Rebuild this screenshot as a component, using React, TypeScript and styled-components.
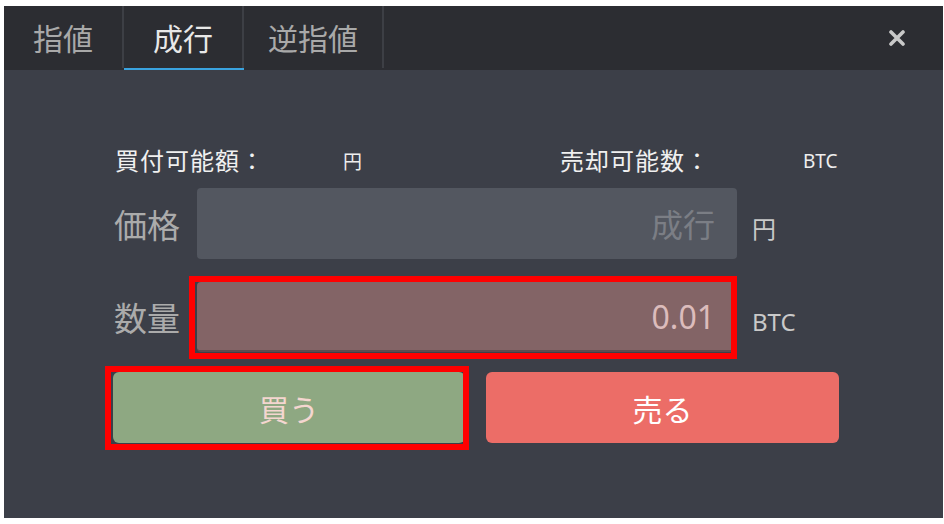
import React from "react";
import styled, { createGlobalStyle } from "styled-components";

const GlobalStyle = createGlobalStyle`
  html, body {
    margin: 0;
    padding: 0;
    background: #ffffff;
  }
  body {
    font-family: "Noto Sans", "Noto Sans CJK JP", sans-serif;
  }
`;

const Panel = styled.div`
  margin: 6px 1px 0 4px;
  height: 512px;
  display: flex;
  flex-direction: column;
  background: #3c3f48;
  font-family: "Noto Sans", "Noto Sans CJK JP", sans-serif;
`;

const TabBar = styled.div`
  height: 64px;
  display: flex;
  align-items: stretch;
  background: #2c2d32;
`;

const Tab = styled.div<{ $active?: boolean }>`
  position: relative;
  min-width: 120px;
  padding: 0 24px;
  box-sizing: border-box;
  display: flex;
  align-items: center;
  justify-content: center;
  font-size: 30px;
  color: ${(p) => (p.$active ? "#e8e8e8" : "#a9a9a9")};
  border-right: 2px solid #3d3f45;
  margin-bottom: 2px;
  &::after {
    content: "";
    display: ${(p) => (p.$active ? "block" : "none")};
    position: absolute;
    left: 0;
    right: -2px;
    bottom: -2px;
    height: 2px;
    background: #3aa3df;
  }
`;

const Spacer = styled.div`
  flex: 1;
`;

const CloseButton = styled.div`
  display: flex;
  align-items: center;
  padding-right: 38px;
`;

const Body = styled.div`
  flex: 1;
  padding: 72px 0 0 109px;
`;

const Form = styled.div`
  width: 726px;
  display: flex;
  flex-direction: column;
`;

const InfoRow = styled.div`
  height: 30px;
  margin-bottom: 16px;
  display: grid;
  grid-template-columns: 230px 215px 245px auto;
  align-items: center;
`;

const InfoLabel = styled.span`
  padding-left: 2px;
  font-size: 24px;
  letter-spacing: 1px;
  color: #f0f0f0;
`;

const InfoUnit = styled.span`
  font-size: 19px;
  color: #eeeeee;
  padding-top: 2px;
`;

const FieldRow = styled.div<{ $gap: number }>`
  display: grid;
  grid-template-columns: 84px 540px auto;
  align-items: center;
  margin-bottom: ${(p) => p.$gap}px;
`;

const FieldLabel = styled.span`
  font-size: 33px;
  color: #ababab;
  padding-left: 1px;
`;

const Field = styled.div<{ $tone: "muted" | "red" }>`
  height: ${(p) => (p.$tone === "red" ? 70 : 71)}px;
  box-sizing: border-box;
  border-radius: 4px;
  display: flex;
  align-items: center;
  justify-content: flex-end;
  padding-right: 22px;
  font-size: 32px;
  background: ${(p) => (p.$tone === "red" ? "#836466" : "#535760")};
  color: ${(p) => (p.$tone === "red" ? "#dcbcbc" : "#7b7e85")};
  border-bottom: 2px solid ${(p) => (p.$tone === "red" ? "#5e4b4e" : "#535760")};
`;

const FieldUnit = styled.span`
  margin-left: 15px;
  font-size: 24px;
  color: #c9c9c9;
  padding-top: 8px;
`;

const ButtonRow = styled.div`
  display: grid;
  grid-template-columns: 352px 353px;
  column-gap: 21px;
`;

const ActionButton = styled.div<{ $kind: "buy" | "sell" }>`
  height: 71px;
  border-radius: 6px;
  display: flex;
  align-items: center;
  justify-content: center;
  font-size: 30px;
  background: ${(p) => (p.$kind === "buy" ? "#8ea882" : "#ec6d67")};
  color: ${(p) => (p.$kind === "buy" ? "#f4d6d0" : "#ffffff")};
`;

// red annotation frame drawn over a control
const Marked = styled.div<{ $inset: string }>`
  position: relative;
  &::after {
    content: "";
    position: absolute;
    inset: ${(p) => p.$inset};
    border: 6px solid #ff0000;
    pointer-events: none;
  }
`;

export default function App() {
  return (
    <>
      <GlobalStyle />
      <Panel>
        <TabBar>
          <Tab>指値</Tab>
          <Tab $active>成行</Tab>
          <Tab>逆指値</Tab>
          <Spacer />
          <CloseButton>
            <svg width="16" height="16" viewBox="0 0 16 16">
              <path
                d="M2 2 L14 14 M14 2 L2 14"
                stroke="#c9c9c9"
                strokeWidth="3.6"
                strokeLinecap="round"
              />
            </svg>
          </CloseButton>
        </TabBar>

        <Body>
          <Form>
            <InfoRow>
              <InfoLabel>買付可能額：</InfoLabel>
              <InfoUnit>円</InfoUnit>
              <InfoLabel>売却可能数：</InfoLabel>
              <InfoUnit>BTC</InfoUnit>
            </InfoRow>

            <FieldRow $gap={23}>
              <FieldLabel>価格</FieldLabel>
              <Field $tone="muted">成行</Field>
              <FieldUnit>円</FieldUnit>
            </FieldRow>

            <FieldRow $gap={20}>
              <FieldLabel>数量</FieldLabel>
              <Marked $inset="-6px 0 -7px -8px">
                <Field $tone="red">0.01</Field>
              </Marked>
              <FieldUnit>BTC</FieldUnit>
            </FieldRow>

            <ButtonRow>
              <Marked $inset="-6px -4px -7px -8px">
                <ActionButton $kind="buy">買う</ActionButton>
              </Marked>
              <ActionButton $kind="sell">売る</ActionButton>
            </ButtonRow>
          </Form>
        </Body>
      </Panel>
    </>
  );
}
